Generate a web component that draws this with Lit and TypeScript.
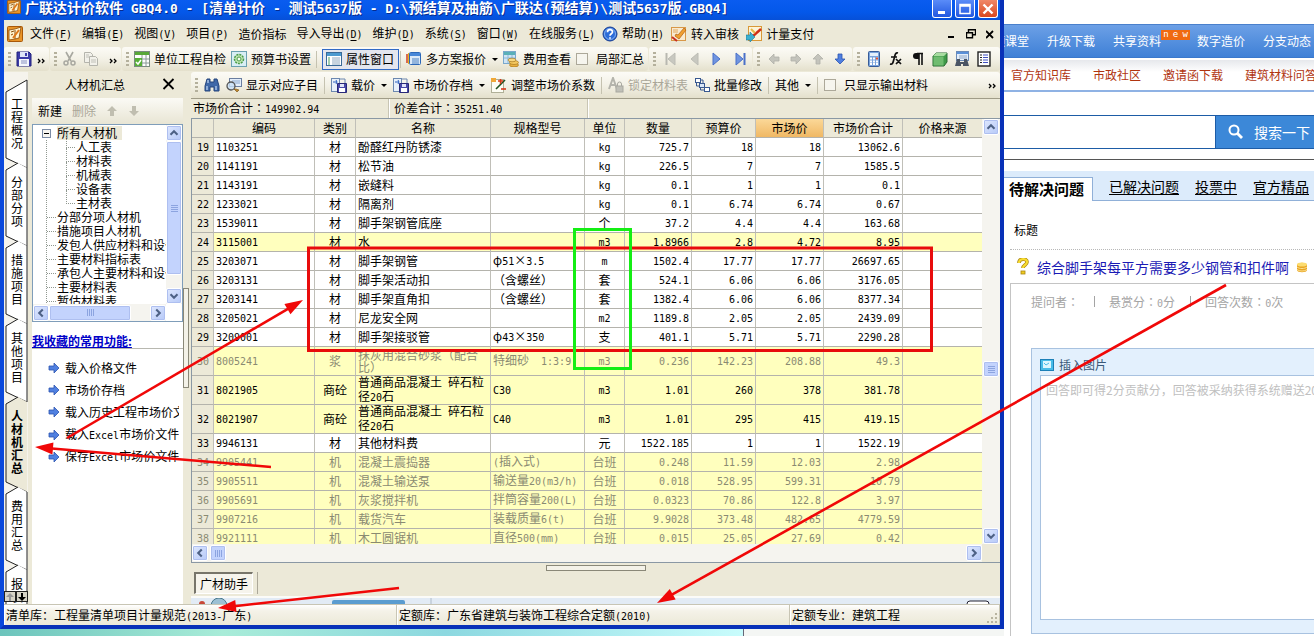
import { LitElement, html, svg, css, nothing } from "lit";
import { customElement } from "lit/decorators.js";
import { classMap } from "lit/directives/class-map.js";

/* Wraps Latin runs in a half-width face so they pair with the 12px Chinese glyphs. */
function t(text: string, centred = false) {
  return text.split(/([\x20-\x7e]+|：)/).filter(Boolean).map((part) =>
    part === "：" ? (centred ? html`<span class="mid">${part}</span>` : part)
    : /^[\x20-\x7e]/.test(part) ? html`<span class="a">${part}</span>` : part);
}

const icon = (body: unknown, w = 16, h = 16) =>
  html`<svg class="ico" width=${w} height=${h} viewBox="0 0 ${w} ${h}" aria-hidden="true">${body}</svg>`;

const app = svg`<rect x=".5" y=".5" width="15" height="15" rx="1" fill="#e89428" stroke="#a85808"/><path d="M2 4l6-1 6-2-2 11-4 1-6 1z" fill="#fff3d0" stroke="#8a4a08" stroke-width=".8"/><path d="M4 6l3-1M4 9l2-1M8 4v9" stroke="#8a4a08"/><path d="M6 12l6-8" stroke="#e07818" stroke-width="2"/>`;
const save = svg`<path d="M1 1h12l2 2v12H1z" fill="#3c3ca8" stroke="#20207c"/><rect x="4" y="1" width="8" height="5" fill="#dfe6f8"/><rect x="9" y="2" width="2" height="3" fill="#3c3ca8"/><rect x="3" y="8" width="10" height="7" fill="#f4f6fc"/><path d="M5 10h6M5 12h6" stroke="#8890c0"/>`;
const cut = svg`<path d="M4 1l5 9M11 1L6 10" stroke="#a8a8a0" stroke-width="1.6"/><circle cx="4" cy="12" r="2" fill="none" stroke="#a8a8a0" stroke-width="1.5"/><circle cx="11" cy="12" r="2" fill="none" stroke="#a8a8a0" stroke-width="1.5"/>`;
const copy = svg`<path d="M1.500 1.500h6l2 2v8h-8z" fill="#f2f1ea" stroke="#b4b4ac"/><path d="M6.500 5.500h6l2 2v7h-8z" fill="#f2f1ea" stroke="#b4b4ac"/><path d="M8 9h5M8 11h5M3 4h3M3 6h3" stroke="#c0c0b8"/>`;
const check = svg`<rect x=".5" y=".5" width="15" height="15" fill="#fff" stroke="#7a8a80"/><rect x="1" y="1" width="14" height="3" fill="#58a838"/><path d="M1 8h14M1 12h14M8 4v11M12 4v11" stroke="#8a9a98"/><rect x="1" y="7" width="7" height="8" fill="#58b038"/><path d="M2 11l2 2 3-4" stroke="#fff" stroke-width="1.500" fill="none"/>`;
const gear = svg`<rect x=".5" y=".5" width="15" height="15" fill="#d8eef4" stroke="#6aa0b0"/><circle cx="8" cy="8" r="4.500" fill="#bfe6b0" stroke="#4a9a4a" stroke-width="1.500" stroke-dasharray="2 1"/><circle cx="8" cy="8" r="2" fill="#f4fff0" stroke="#4a9a4a"/>`;
const props = svg`<rect x=".5" y="1.500" width="15" height="13" fill="#fff" stroke="#3a6a98"/><rect x="1" y="2" width="14" height="3" fill="#4c9ad0"/><path d="M2 7h2M2 9h2M2 11h2M2 13h2" stroke="#48a060"/><path d="M6 7h8M6 9h8M6 11h8M6 13h8" stroke="#90a8c0"/>`;
const plans = svg`<path d="M1 3v9" stroke="#d04020" stroke-width="1.500"/><path d="M2.500 2v11" stroke="#e8b020"/><rect x="3.500" y="1.500" width="11" height="12" rx="1" fill="#dceaf8" stroke="#2c68b8"/><rect x="4" y="2" width="10" height="3" fill="#4888d8"/><path d="M6 8h7M6 10h7M6 12h7" stroke="#4a80c0"/>`;
const fee = svg`<rect x=".5" y=".5" width="12" height="12" fill="#cfe4f4" stroke="#7aa8cc"/><rect x="1" y="1" width="11" height="3" fill="#5ab0b8"/><path d="M1 7h11M5 4v8M9 4v8" stroke="#8ab8d8"/><ellipse cx="11" cy="14" rx="4.500" ry="2" fill="#e8b040" stroke="#9a6a10" stroke-width=".6"/><ellipse cx="11" cy="11.500" rx="4.500" ry="2" fill="#f4c860" stroke="#9a6a10" stroke-width=".6"/><ellipse cx="9" cy="9" rx="4" ry="1.800" fill="#f8d880" stroke="#9a6a10" stroke-width=".6"/>`;
const tri = (dir: number, bar: boolean, on: boolean) => svg`<g transform=${dir < 0 ? "translate(16 0) scale(-1 1)" : ""}><path d="M4 2l7 6-7 6z" fill=${on ? "#6f94e0" : "#c8c8c0"} stroke=${on ? "#4a70c8" : "#bcbcb4"}/>${bar ? svg`<path d="M12.500 2v12" stroke=${on ? "#4a70c8" : "#b8b8b0"} stroke-width="2"/>` : nothing}</g>`;
const arrow = (deg: number, on: boolean) => svg`<path transform="rotate(${deg} 8 8)" d="M3 6h5V3l5 5-5 5v-3H3z" fill=${on ? "#5080e0" : "#c4c4bc"} stroke=${on ? "#2c54b0" : "#b0b0a8"} stroke-width=".8"/>`;
const calc = svg`<rect x="2.500" y=".5" width="11" height="15" rx="1" fill="#7aa4dc" stroke="#385c98"/><rect x="4" y="2" width="8" height="3" fill="#e4f0fc"/><path d="M4 7.500h8M4 10.500h8M4 13h8" stroke="#fff" stroke-width="2" stroke-dasharray="2 1"/><path d="M10 7.500h2" stroke="#e05030" stroke-width="2"/>`;
const fx = svg`<path d="M10 2c-3-1-3 3-4 6s-1 6-4 5M3 6h6M8 8l5 5M13 8l-5 5" fill="none" stroke="#111" stroke-width="1.700"/>`;
const para = svg`<path d="M13 2.500H7M9 3v11M12 3v11" stroke="#111" stroke-width="1.600" fill="none"/><path d="M9 2H6a3 3 0 000 6h3z" fill="#111"/>`;
const cube = svg`<path d="M1 5l3-3h11v9l-3 4H1z" fill="#3f9a48" stroke="#2a6a34"/><path d="M1 5l3-3h11l-3 3z" fill="#a8dca0"/><path d="M1.500 5.500h10v9h-10z" fill="#70bc70"/>`;
const find = svg`<rect x="2.500" y=".5" width="12" height="9" fill="#e4eefa" stroke="#6a8ab8"/><rect x="3" y="1" width="11" height="2" fill="#5a90d8"/><path d="M5 5h8M5 7h8" stroke="#90a8c8"/><path d="M3 8h3v3h4V8h3l2 7H9v-2H7v2H1z" fill="#4a5464"/>`;
const list = svg`<rect x="2" y="1" width="12" height="14" fill="#fff" stroke="#222" stroke-width="1.400"/><path d="M4 4h2M4 6.500h2M4 9h2M4 11.500h2" stroke="#222"/><path d="M7 4h5M7 6.500h5M7 9h5M7 11.500h5" stroke="#4050c0"/>`;
const bino = svg`<path d="M3 2h3v3h4V2h3l2 7v5h-5v-4H6v4H1V9z" fill="#3f68a8" stroke="#24447c"/><path d="M3 9v4M12 9v4M4 3v3" stroke="#b8d0f0" stroke-width="1.300"/>`;
const look = svg`<rect x="3.500" y="1.500" width="12" height="8" fill="#e4eefa" stroke="#6a7ea0"/><path d="M6 4h8M6 6h8" stroke="#8aa8d0"/><circle cx="5" cy="9" r="4" fill="#c8e0f8" fill-opacity=".8" stroke="#555" stroke-width="1.300"/><path d="M8 12l3 3 2-2-3-1z" fill="#c08830" stroke="#704c10" stroke-width=".6"/>`;
const load = svg`<rect x=".5" y="1.500" width="8" height="13" fill="#e8f0fa" stroke="#6c88b0"/><path d="M2 5h4l-1-2M6 5l-1 2" stroke="#2c60c0" fill="none"/><path d="M6.500 6.500h9v9h-9z" fill="#4848a8" stroke="#282878"/><rect x="9" y="7" width="4" height="3" fill="#e0e4f8"/><rect x="8" y="11" width="6" height="4" fill="#fff"/><path d="M8 2h6v4" fill="none" stroke="#6c88b0"/>`;
const adjust = svg`<rect x=".5" y="2.500" width="12" height="13" fill="#fdfdf4" stroke="#b0b098"/><rect x="0" y="1" width="5" height="4" fill="#f0a838"/><path d="M5 12L14 3" stroke="#205020" stroke-width="1.600"/><path d="M7 4h5M9.500 2v5" stroke="#d83818" stroke-width="1.500"/><path d="M10 12h5" stroke="#d83818" stroke-width="1.600"/>`;
const lock = svg`<path d="M1 12L5 1l4 11M3 8h5" fill="none" stroke="#b4b4ac" stroke-width="2"/><rect x="8" y="9" width="7" height="6" fill="#c0c0b8" stroke="#a8a8a0"/><path d="M9.500 9V7a2 2 0 014 0v2" fill="none" stroke="#a8a8a0"/>`;
const batch = svg`<rect x="1.500" y="1.500" width="5" height="4" fill="#fff" stroke="#385890"/><rect x="5.500" y="6.500" width="5" height="4" fill="#d8e6f8" stroke="#385890"/><rect x="10.500" y="10.500" width="5" height="4" fill="#fff" stroke="#385890"/><path d="M2.500 6v3h3M6.500 11v2h4M6 3h3v3" fill="none" stroke="#385890"/>`;
const help = svg`<circle cx="8" cy="8" r="7" fill="#2c6cd8" stroke="#163c90"/><circle cx="8" cy="8" r="5.500" fill="none" stroke="#a8ccf8" stroke-width=".7"/><path d="M5.500 6.200c0-3.400 5-3.200 5-.3 0 1.800-2.500 1.900-2.500 3.800M8 11.200v1.600" fill="none" stroke="#fff" stroke-width="1.700"/>`;
const audit = svg`<rect x=".5" y="1.500" width="14" height="13" fill="#f8ead0" stroke="#d89848"/><path d="M2 6h5M2 4h5" stroke="#e0a860"/><path d="M4 10l4 3 7-9-2-2-6 7-2-1z" fill="#f0a030" stroke="#b05c10" stroke-width=".7"/><path d="M1 11l5 4" stroke="#c83020" stroke-width="2"/>`;
const pay = svg`<rect x="2.500" y=".5" width="13" height="14" fill="#fdf4d8" stroke="#d89838"/><path d="M7 10l8-7" stroke="#d03018" stroke-width="2.400" fill="none"/><path d="M5 3l4 4" stroke="#e8b848" stroke-width="2"/><path d="M9 11L4 6v3H0v5h4v2z" fill="#3cb0d0" stroke="#207890" stroke-width=".6"/>`;
const chev = (deg: number) => svg`<path transform="rotate(${deg} 8 8)" d="M4 10l4-4 4 4" fill="none" stroke="#4d6185" stroke-width="2.400"/>`;

const scrollBtn = (label: string, deg: number) =>
  html`<button class="sb" aria-label=${label}><svg width="14" height="14" viewBox="0 0 16 16" aria-hidden="true">${chev(deg)}</svg></button>`;
const grip = html`<i class="grip"></i>`;
const sep = html`<i class="sep"></i>`;
const more = html`<button class="more" aria-label="更多"><svg width="8" height="7" viewBox="0 0 8 7" aria-hidden="true"><path d="M1 1l2 2-2 2M5 1l2 2-2 2" fill="none" stroke="#000" stroke-width="1.300"/></svg></button>`;
const tool = (pic: unknown, text = "", o: { cls?: string; drop?: boolean; label?: string } = {}) =>
  html`<button class="tool ${o.cls ?? ""}" aria-label=${text || o.label || "工具"}>${icon(pic)}${text ? html`<span>${text}</span>` : nothing}${o.drop ? html`<i class="drop"></i>` : nothing}</button>`;

const MENU: [string, string][] = [["文件", "F"], ["编辑", "E"], ["视图", "V"], ["项目", "P"], ["造价指标", ""], ["导入导出", "D"], ["维护", "D"], ["系统", "S"], ["窗口", "W"], ["在线服务", "L"]];
const TABS = ["工程概况", "分部分项", "措施项目", "其他项目", "人材机汇总", "费用汇总", "报表"];
const TREE: [number, string][] = [[0, "所有人材机"], [2, "人工表"], [2, "材料表"], [2, "机械表"], [2, "设备表"], [2, "主材表"], [1, "分部分项人材机"], [1, "措施项目人材机"], [1, "发包人供应材料和设备"], [1, "主要材料指标表"], [1, "承包人主要材料和设备"], [1, "主要材料表"], [1, "暂估材料表"]];
const LINKS = ["载入价格文件", "市场价存档", "载入历史工程市场价文件", "载入Excel市场价文件", "保存Excel市场价文件"];
const HEAD = ["", "编码", "类别", "名称", "规格型号", "单位", "数量", "预算价", "市场价", "市场价合计", "价格来源"];
/* tone: "" plain, "y" highlighted, "g" highlighted and inactive */
const ROWS: [string, ...string[]][] = [
  ["", "19", "1103251", "材", "酚醛红丹防锈漆", "", "kg", "725.7", "18", "18", "13062.6"],
  ["", "20", "1141191", "材", "松节油", "", "kg", "226.5", "7", "7", "1585.5"],
  ["", "21", "1143191", "材", "嵌缝料", "", "kg", "0.1", "1", "1", "0.1"],
  ["", "22", "1233021", "材", "隔离剂", "", "kg", "0.1", "6.74", "6.74", "0.67"],
  ["", "23", "1539011", "材", "脚手架钢管底座", "", "个", "37.2", "4.4", "4.4", "163.68"],
  ["y", "24", "3115001", "材", "水", "", "m3", "1.8966", "2.8", "4.72", "8.95"],
  ["", "25", "3203071", "材", "脚手架钢管", "φ51×3.5", "m", "1502.4", "17.77", "17.77", "26697.65"],
  ["", "26", "3203131", "材", "脚手架活动扣", "（含螺丝）", "套", "524.1", "6.06", "6.06", "3176.05"],
  ["", "27", "3203141", "材", "脚手架直角扣", "（含螺丝）", "套", "1382.4", "6.06", "6.06", "8377.34"],
  ["", "28", "3205021", "材", "尼龙安全网", "", "m2", "1189.8", "2.05", "2.05", "2439.09"],
  ["", "29", "3209001", "材", "脚手架接驳管", "φ43×350", "支", "401.1", "5.71", "5.71", "2290.28"],
  ["g", "30", "8005241", "浆", "抹灰用混合砂浆（配合比）", "特细砂  1:3:9", "m3", "0.236", "142.23", "208.88", "49.3"],
  ["y", "31", "8021905", "商砼", "普通商品混凝土 碎石粒径20石", "C30", "m3", "1.01", "260", "378", "381.78"],
  ["y", "32", "8021907", "商砼", "普通商品混凝土 碎石粒径20石", "C40", "m3", "1.01", "295", "415", "419.15"],
  ["", "33", "9946131", "材", "其他材料费", "", "元", "1522.185", "1", "1", "1522.19"],
  ["g", "34", "9905441", "机", "混凝土震捣器", "(插入式)", "台班", "0.248", "11.59", "12.03", "2.98"],
  ["g", "35", "9905511", "机", "混凝土输送泵", "输送量20(m3/h)", "台班", "0.018", "528.95", "599.31", "10.79"],
  ["g", "36", "9905691", "机", "灰浆搅拌机", "拌筒容量200(L)", "台班", "0.0323", "70.86", "122.8", "3.97"],
  ["g", "37", "9907216", "机", "载货汽车", "装载质量6(t)", "台班", "9.9028", "373.48", "482.65", "4779.59"],
  ["g", "38", "9921111", "机", "木工圆锯机", "直径500(mm)", "台班", "0.015", "25.05", "27.69", "0.42"],
];

const base = css`
  * { box-sizing: border-box; }
  .a { font-family: "DejaVu Sans Mono", monospace; font-size: 10px; white-space: pre; }
  .mid { font-family: "Noto Sans CJK TC", sans-serif; }
  button { font: inherit; color: inherit; border: 0; background: none; padding: 0; margin: 0; }
  .ico { display: block; flex: none; }
`;

@customElement("estimate-window")
class EstimateWindow extends LitElement {
  static styles = [base, css`
    :host { display: flex; flex-direction: column; min-width: 0; min-height: 0; background: #ece9d8; border: 4px solid #0a48dc; border-top: 0; border-right-color: #0831b8; border-bottom-color: #0831b8; overflow: hidden; }
    .title { flex: none; height: 20px; margin: 0 -4px; padding: 0 6px; display: flex; align-items: flex-start; gap: 3px; background: linear-gradient(#0a5cf0, #0458ea 60%, #0650d8); color: #fff; }
    .title h1 { flex: 1; min-width: 0; margin: 0; font-size: 14px; line-height: 14px; font-weight: 700; white-space: nowrap; text-shadow: 1px 1px #062c90; }
    .title .a { font-size: 13px; white-space: pre; }
    .title .ico { height: 14px; }
    .cap { width: 20px; height: 18px; border: 1px solid #fff; border-top: 0; border-radius: 0 0 3px 3px; background: linear-gradient(#5a8cf8, #2258e0); flex: none; display: grid; place-items: center; }
    .cap.x { background: linear-gradient(#f08868, #d84820); }
    .menu { flex: none; height: 27px; display: flex; align-items: center; gap: 10px; padding: 0 6px 0 3px; white-space: nowrap; }
    .menu .mi { display: flex; align-items: center; gap: 4px; }
    .menu .ic2 { margin-left: -3px; }
    .menu .sp { flex: 1; }
    .menu u { text-underline-offset: 2px; }
    .bar { flex: none; display: flex; height: 24px; overflow: hidden; white-space: nowrap; }
    .main .bar { height: 26px; }
    .band { display: flex; align-items: center; padding: 0 4px; gap: 5px; border-radius: 3px; background: linear-gradient(#fcfbf6, #f3f1e6 50%, #e4e0cc); flex: none; margin-right: 1px; }
    .band.m { gap: 6px; }
    .band.l { gap: 7px; }
    .band.last { flex: 1; margin-right: 0; }
    .grip { width: 3px; height: 15px; flex: none; background: repeating-linear-gradient(#b4b09c 0 2px, transparent 2px 4px); }
    .sep { width: 1px; height: 17px; background: #c5c2b0; flex: none; }
    .tool { display: flex; align-items: center; gap: 4px; height: 21px; }
    .tool.on { border: 1px solid #316ac5; background: #e4e6ee; padding: 0 4px 0 3px; margin-right: -4px; }
    .tool.off { color: #aaa698; }
    .drop { border: 3px solid transparent; border-top-color: #000; border-bottom: 0; margin-left: 2px; }
    .more { align-self: flex-start; padding-top: 5px; }
    .tool + .more { margin-left: 5px; }
    .s .tool + .more { margin-left: 0; }
    .tick { display: flex; align-items: center; gap: 8px; }
    .tick input { appearance: none; width: 12px; height: 12px; border: 1px solid #aca899; margin: 0; background: #f6f5ee; }
    .body { flex: 1; min-height: 0; display: flex; padding-top: 1px; }
    .tabs { width: 24px; flex: none; padding: 12px 0 0 2px; background: #f5f3ec; overflow: hidden; position: relative; }
    .tab { display: flex; align-items: center; justify-content: center; position: relative; width: 22px; height: 78px; }
    .tab.long { height: 90px; font-weight: 700; }
    .tab.cutoff { align-items: flex-start; padding-top: 13px; }
    .tab svg { position: absolute; left: 0; top: -8px; overflow: visible; }
    .tab span { position: relative; width: 12px; line-height: 13px; word-break: break-all; }
    .flip { position: absolute; left: 0; bottom: 2px; display: flex; }
    .flip button { width: 12px; height: 11px; border: 1px solid #222; background: #d8d5c8; display: grid; place-items: center; }
    .side { flex: none; width: 151px; min-width: 0; margin-left: 4px; display: flex; flex-direction: column; background: #fff; min-height: 0; overflow: hidden; }
    .side header { flex: none; height: 26px; background: #ece9d8; display: flex; align-items: center; justify-content: space-between; padding: 0 8px 0 33px; }
    .side .cmds { flex: none; height: 26px; padding: 0 6px; display: flex; align-items: center; gap: 10px; background: linear-gradient(#fbfaf5, #e8e5d4); }
    .off { color: #aaa698; }
    .treebox { flex: none; height: 198px; border: 1px solid #7f9db9; display: grid; grid-template-columns: minmax(0, 1fr) 16px; grid-template-rows: minmax(0, 1fr) 17px; }
    .tree { overflow: hidden; margin: 1px 0 0; padding: 0; list-style: none; min-height: 0; white-space: nowrap; background: repeating-linear-gradient(#909890 0 1px, transparent 1px 2px) 13px 14px / 1px 200px no-repeat; }
    .tree li { height: 14px; line-height: 14px; display: flex; align-items: center; padding-left: 14px; }
    .tree li i { width: 9px; margin-right: 1px; border-top: 1px dotted #909890; flex: none; }
    .tree li.d2 { padding-left: 33px; }
    .tree li.d2 i { position: relative; }
    .tree li.d2 i::before { content: ""; position: absolute; left: 0; bottom: 0; height: 14px; border-left: 1px dotted #909890; }
    .tree li.d0 { padding-left: 9px; gap: 6px; }
    .tree li.d0 span { background: #ece9d8; padding-right: 5px; }
    .tree li.d0 button { width: 9px; height: 9px; border: 1px solid #7b8ba5; background: #f6f5f0; display: grid; place-items: center; }
    .tree li.d0 button::before { content: ""; width: 5px; height: 1px; background: #000; }
    .vs, .hs { display: flex; background: #f5f4ef; }
    .vs { flex-direction: column; align-items: center; }
    .hs { align-items: center; }
    .sb { width: 16px; height: 16px; flex: none; display: grid; place-items: center; background: linear-gradient(135deg, #dfe8fe, #b6c9f8); border: 1px solid #fff; border-radius: 2px; box-shadow: inset 0 0 0 1px #aebff0; }
    .thumb { background: #c3d3fd; border: 1px solid #fff; border-radius: 2px; box-shadow: inset 0 0 0 1px #aebff0; display: grid; place-items: center; }
    .thumb::before { content: ""; width: 7px; height: 7px; background: repeating-linear-gradient(#8ca4e0 0 1px, transparent 1px 2px); }
    .hs .thumb { height: 16px; }
    .vs .thumb { width: 16px; }
    .hs .thumb::before { background: repeating-linear-gradient(90deg, #8ca4e0 0 1px, transparent 1px 2px); }
    .t1 { height: 134px; }
    .t2 { width: 82px; }
    .t3 { height: 16px; }
    .t4 { width: 16px; margin-left: 2px; }
    .grow { flex: 1; }
    .grow3 { flex: 3; }
    .grow2 { flex: 2; }
    .fav { margin: 10px 0 0; height: 17px; border-bottom: 1px solid #b8b8b0; font-size: 12px; line-height: 18px; font-weight: 700; color: #0000c8; text-decoration: underline; white-space: nowrap; flex: none; }
    .links { list-style: none; margin: 8px 4px 0 14px; padding: 0; overflow: hidden; white-space: nowrap; }
    .links li { height: 22px; line-height: 22px; }
    .links a { display: flex; align-items: center; gap: 3px; color: #000; text-decoration: none; }
    .vsplit { width: 8px; flex: none; display: flex; align-items: center; }
    .vsplit i { width: 6px; height: 100px; border: 1px solid #8a8878; background: #f4f2e8; }
    .main { flex: 1; min-width: 0; display: flex; flex-direction: column; }
    .info { flex: none; height: 20px; display: flex; line-height: 18px; border-top: 1px solid #a09c88; white-space: nowrap; }
    .info span.cell { width: 199px; padding-left: 2px; border-right: 1px solid #fff; box-shadow: inset -1px 0 #c8c5b4; }
    .info span.cell + .cell { padding-left: 4px; }
    .grid { flex: 1; min-height: 0; display: grid; grid-template-columns: minmax(0, 1fr) 18px; grid-template-rows: minmax(0, 1fr) 18px; border: 1px solid #8a98a4; border-right: 0; background: #ece9d8; }
    .clip { overflow: hidden; min-height: 0; }
    table { width: 100%; table-layout: fixed; border-collapse: separate; border-spacing: 0; background: #fff; }
    th, td { height: 19px; padding: 0 2px; line-height: 12px; border-right: 1px solid #c0bfb8; border-bottom: 1px solid #b4b3ac; font-weight: 400; overflow: hidden; white-space: nowrap; }
    thead th { background: #ece9d8; text-align: center; }
    thead th.hot { background: linear-gradient(#fbd898, #f0b864); }
    tbody th { background: #ece9d8; text-align: right; padding-right: 4px; }
    td:last-child, th:last-child { border-right: 0; }
    td.c { text-align: center; }
    td.r { text-align: right; }
    td.w, td.w .a { white-space: normal; }
    tr.y, tr.g { background: #ffffbe; }
    tr.g { color: #8a8a72; }
    tr.tall td, tr.tall th { height: 29px; }
    .c0 { width: 22px; } .c1 { width: 101px; } .c2 { width: 41px; } .c3 { width: 135px; } .c4 { width: 94px; } .c5 { width: 40px; }
    .c6 { width: 67px; } .c7 { width: 64px; } .c8 { width: 68px; } .c9 { width: 79px; }
    .hsplit { height: 9px; flex: none; display: flex; justify-content: center; align-items: center; }
    .hsplit i { width: 100px; height: 6px; border: 1px solid #8a8878; background: #f4f2e8; }
    .helper { flex: none; height: 22px; padding-left: 3px; display: flex; }
    .helper button { border: 1px solid #fff; border-left: 2px solid #77756a; border-top: 2px solid #77756a; background: #f6f4ec; padding: 0 4px; line-height: 18px; white-space: nowrap; }
    .helper i { border-left: 1px solid #aca899; margin-left: 4px; }
    .strip { flex: none; height: 8px; margin-top: 2px; border-top: 2px solid #fbfbf8; background: #e2ebf5; overflow: hidden; }
    .strip svg { display: block; }
    .status { flex: none; height: 21px; display: grid; grid-template-columns: 393fr 393fr 210fr; border-top: 1px solid #c8c5b4; background: linear-gradient(#fff, #f4f2e8 30%, #ece9d8); line-height: 20px; white-space: nowrap; }
    .status span.cell { padding-left: 1px; overflow: hidden; border-left: 1px solid #fff; box-shadow: inset -1px 0 #c8c5b4; }
    .status .end { display: flex; justify-content: space-between; align-items: flex-end; box-shadow: none; }
  `];

  private tab(label: string) {
    const on = label === "人材机汇总";
    const first = label === TABS[0];
    const h = on ? 90 : 78;
    const peak = first ? "21 4" : "12 9";
    const right = first ? 4 : 14;
    return html`<button class=${classMap({ tab: true, long: on, cutoff: label === "报表" })} aria-pressed=${on}>
      <svg width="22" height=${h} aria-hidden="true">
        <path d="M0 ${h + 4}V16L${peak} L21 ${right}V${h + 14}Z" fill=${on ? "#ece9d8" : "#fff"}/>
        <path d="M${peak}L0 16V${h + 4}L21 ${h + 14}${on ? "" : `V${right}`}" fill="none" stroke="#222"/>
      </svg><span>${label}</span></button>`;
  }

  render() {
    return html`
      <div class="title">${icon(app)}<h1>${t("广联达计价软件 GBQ4.0 - [清单计价 - 测试5637版 - D:\\预结算及抽筋\\广联达(预结算)\\测试5637版.GBQ4]")}</h1>
        <button class="cap" aria-label="最小化"><svg width="12" height="12"><path d="M2 9.500h7" stroke="#fff" stroke-width="3"/></svg></button>
        <button class="cap" aria-label="最大化"><svg width="12" height="12"><path d="M1 1.500h10v9H1zM1 3h10" fill="none" stroke="#fff" stroke-width="1.500"/></svg></button>
        <button class="cap x" aria-label="关闭"><svg width="12" height="12"><path d="M1.500 1.500l9 9m0-9l-9 9" stroke="#fff" stroke-width="2.400"/></svg></button>
      </div>
      <nav class="menu">
        <span class="mi">${icon(app)}</span>
        ${MENU.map(([m, k], i) => html`<button class=${i ? "" : "ic2"}>${m}${k ? html`<span class="a">(<u>${k}</u>)</span>` : nothing}</button>`)}
        <button class="mi ic2">${icon(help)}<span>帮助<span class="a">(<u>H</u>)</span></span></button>
        <button class="mi ic2">${icon(audit)}转入审核</button>
        <button class="mi ic2">${icon(pay)}计量支付</button>
        <span class="sp"></span>
        <button aria-label="最小化文档"><svg width="8" height="10"><path d="M0 8h6" stroke="#000" stroke-width="2"/></svg></button>
        <button aria-label="还原文档"><svg width="10" height="10"><path d="M2.500 3V.8h7v5H7M.5 3.800h6v5h-6z" fill="none" stroke="#000" stroke-width="1.400"/></svg></button>
        <button aria-label="关闭文档"><svg width="8" height="9"><path d="M0 1l7 7m0-7L0 8" stroke="#000" stroke-width="1.800"/></svg></button>
      </nav>
      <div class="bar">
        <div class="band s">${grip}${tool(save, "", { label: "保存" })}${more}</div>
        <div class="band">${grip}${tool(cut, "", { label: "剪切" })}${tool(copy, "", { label: "复制" })}${more}</div>
        <div class="band">${grip}${tool(check, "单位工程自检")}${tool(gear, "预算书设置")}${sep}${tool(props, "属性窗口", { cls: "on" })}${sep}${tool(plans, "多方案报价", { drop: true })}${tool(fee, "费用查看")}
          <label class="tick"><input type="checkbox">局部汇总</label></div>
        <div class="band l">${grip}${tool(tri(-1, true, false), "", { label: "首条" })}${tool(tri(-1, false, false), "", { label: "上一条" })}${tool(tri(1, false, true), "", { label: "下一条" })}${tool(tri(1, true, true), "", { label: "末条" })}</div>
        <div class="band m">${grip}${tool(arrow(180, false), "", { label: "左移" })}${tool(arrow(0, false), "", { label: "右移" })}${tool(arrow(-90, false), "", { label: "上移" })}${tool(arrow(90, true), "", { label: "下移" })}</div>
        <div class="band last m">${grip}${tool(calc, "", { label: "计算器" })}${tool(fx, "", { label: "函数" })}${tool(para, "", { label: "段落" })}${tool(cube, "", { label: "图形" })}${tool(find, "", { label: "查找" })}${tool(list, "", { label: "列表" })}</div>
      </div>
      <div class="body">
        <nav class="tabs">${TABS.map((x) => this.tab(x))}
          <div class="flip"><button aria-label="上翻"><svg width="8" height="8"><path d="M4 0l4 4H5v4H3V4H0z" fill="#999"/></svg></button><button aria-label="下翻"><svg width="8" height="8"><path d="M4 8l4-4H5V0H3v4H0z" fill="#000"/></svg></button></div>
        </nav>
        <aside class="side">
          <header>人材机汇总<button aria-label="关闭面板"><svg width="13" height="12"><path d="M1.500 1l10 10m0-10l-10 10" stroke="#000" stroke-width="1.800"/></svg></button></header>
          <div class="cmds"><button>新建</button><button class="off">删除</button><button aria-label="上移">${icon(svg`<path d="M6 1l5 5H8v5H4V6H1z" fill="#c0beb0"/>`, 12, 12)}</button><button aria-label="下移">${icon(svg`<path d="M6 11l5-5H8V1H4v5H1z" fill="#c0beb0"/>`, 12, 12)}</button></div>
          <div class="treebox">
            <ul class="tree">${TREE.map(([d, x]) => html`<li class="d${d}">${d ? html`<i></i>` : html`<button aria-label="折叠"></button>`}<span>${x}</span></li>`)}</ul>
            <div class="vs">${scrollBtn("向上", 0)}<div class="thumb t1"></div><div class="grow"></div>${scrollBtn("向下", 180)}</div>
            <div class="hs">${scrollBtn("向左", -90)}<div class="thumb t2"></div><div class="grow"></div>${scrollBtn("向右", 90)}</div>
          </div>
          <h2 class="fav">我收藏的常用功能:</h2>
          <ul class="links">${LINKS.map((x) => html`<li><a href="#">${icon(arrow(0, true))}<span>${t(x)}</span></a></li>`)}</ul>
        </aside>
        <div class="vsplit"><i></i></div>
        <section class="main">
          <div class="bar">
            <div class="band last m">${grip}${tool(bino, "", { label: "查找" })}${tool(look, "显示对应子目")}${sep}${tool(load, "载价", { drop: true })}${tool(load, "市场价存档", { drop: true })}${tool(adjust, "调整市场价系数")}${sep}${tool(lock, "锁定材料表", { cls: "off" })}${tool(batch, "批量修改")}${sep}<button class="tool">其他<i class="drop"></i></button>${sep}
              <label class="tick"><input type="checkbox">只显示输出材料</label><span class="grow"></span>${more}</div>
          </div>
          <div class="info"><span class="cell">${t("市场价合计：149902.94", true)}</span><span class="cell">${t("价差合计：35251.40", true)}</span></div>
          <div class="grid">
            <div class="clip"><table>
              <colgroup>${HEAD.map((_, i) => html`<col class="c${i}">`)}</colgroup>
              <thead><tr>${HEAD.map((h) => html`<th class=${h === "市场价" ? "hot" : ""}>${h}</th>`)}</tr></thead>
              <tbody>${ROWS.map(([tone, no, ...cells]) => html`<tr class=${classMap({ y: tone === "y", g: tone === "g", tall: cells[2].length > 10 })}><th scope="row">${t(no)}</th>
                ${cells.map((c, i) => html`<td class=${i === 1 || i === 4 ? "c" : i > 4 ? "r" : i === 2 ? "w" : ""}>${t(c)}</td>`)}<td></td></tr>`)}</tbody>
            </table></div>
            <div class="vs">${scrollBtn("向上", 0)}<div class="grow3"></div><div class="thumb t3"></div><div class="grow2"></div>${scrollBtn("向下", 180)}</div>
            <div class="hs">${scrollBtn("向左", -90)}<div class="thumb t4"></div><div class="grow"></div>${scrollBtn("向右", 90)}</div>
          </div>
          <div class="hsplit"><i></i></div>
          <div class="helper"><button>广材助手</button><i></i></div>
          <div class="strip"><svg width="808" height="6"><circle cx="11" cy="6" r="3" fill="#c84838"/><circle cx="28" cy="8" r="8" fill="#9cc0d4" stroke="#48788c"/><rect x="141" y="2" width="73" height="8" rx="2" fill="#5a9cd0"/><path d="M240 0v6" stroke="#b0bcc8"/><rect x="776" y="3" width="22" height="8" rx="3" fill="#fff" stroke="#223"/></svg></div>
        </section>
      </div>
      <footer class="status"><span class="cell">${t("清单库：工程量清单项目计量规范(2013-广东)")}</span><span class="cell">${t("定额库：广东省建筑与装饰工程综合定额(2010)")}</span><span class="cell end">${t("定额专业：建筑工程")}<span class="grow"></span><svg width="14" height="14"><path d="M9 3h2M5 7h2M9 7h2M1 11h2M5 11h2M9 11h2" stroke="#b8b4a0" stroke-width="2"/></svg></span></footer>`;
  }
}

@customElement("qa-page")
class QaPage extends LitElement {
  static styles = [base, css`
    :host { display: flex; flex-direction: column; min-width: 0; overflow: hidden; background: #fff; white-space: nowrap; padding-top: 24px; }
    a { color: inherit; text-decoration: none; }
    .nav { flex: none; height: 34px; display: flex; align-items: center; gap: 18px; background: linear-gradient(#6da0e6, #5590de 50%, #3f80d6); color: #fff; border-top: 1px solid #4a80cc; border-bottom: 1px solid #3a78cc; }
    .nav a:first-child { width: 25px; direction: rtl; overflow: hidden; }
    .nav .res { position: relative; margin-right: 18px; }
    .nav b { position: absolute; left: 48px; top: -3px; width: 29px; height: 10px; background: #f06a10; font: 400 9px/9px "DejaVu Sans Mono", monospace; display: flex; justify-content: space-around; }
    .sub { flex: none; height: 34px; display: flex; align-items: center; gap: 22px; padding-left: 7px; color: #b03410; background: linear-gradient(#e6e8ec, #fff 40%); border-bottom: 2px solid #8fb2e4; border-top: 2px solid #fff; }
    .search { flex: none; height: 34px; margin-top: 23px; display: flex; border: 1px solid #1d5ca6; border-width: 1px 0; }
    .search input { flex: 1; min-width: 0; border: 0; outline: 0; padding: 0 8px; }
    .search button { flex: none; width: 99px; background: #3c88d8; border-left: 1px solid #1d5ca6; color: #fff; font-size: 14px; display: flex; align-items: center; padding-left: 12px; gap: 10px; }
    hr { width: 100%; flex: none; border: 0; border-top: 1px solid #555; margin: 10px 0 11px; }
    .tabs { flex: none; height: 30px; display: flex; align-items: center; gap: 16px; font-size: 14px; background: #dcebfb; border-bottom: 1px solid #90b0d8; padding-top: 1px; }
    .tabs a { text-decoration: underline; text-underline-offset: 2px; }
    .tabs .cur { align-self: flex-end; height: 24px; line-height: 22px; margin-bottom: -1px; padding: 0 8px 0 5px; background: #fff; border: 1px solid #90b0d8; border-left: 0; border-bottom: 0; font-size: 15px; font-weight: 700; text-decoration: none; }
    .head { margin: 20px 0 0 6px; padding-left: 4px; height: 29px; line-height: 18px; border-bottom: 1px dotted #b8b8b8; flex: none; }
    .q { flex: none; height: 33px; display: flex; align-items: center; gap: 8px; padding-left: 13px; font-size: 14px; color: #1a1ab4; }
    .card { flex: 1; min-height: 0; margin-left: 6px; border: 1px solid #c4c4c4; border-width: 1px 0 0 1px; padding: 7px 0 2px 20px; display: flex; flex-direction: column; }
    .meta { display: flex; height: 22px; line-height: 22px; color: #a4a4a4; flex: none; margin-bottom: 35px; }
    .meta span.f { margin-right: 12px; }
    .meta i { font-style: normal; width: 2px; border-left: 1px solid #a4a4a4; height: 11px; margin: 5px 13px 0 3px; }
    .reply { flex: 1; min-height: 0; background: #e3f0fd; border: 1px solid #a8c2e0; border-right: 0; padding: 6px 0 13px 8px; display: flex; flex-direction: column; }
    .reply button { display: flex; align-items: center; gap: 5px; height: 20px; flex: none; color: #3a5878; }
    .reply textarea { flex: 1; resize: none; overflow: hidden; font: 12px/16px "Noto Sans CJK SC", sans-serif; border: 1px solid #a8c2e0; border-right: 0; outline: 0; padding: 6px 5px; margin: 0; background: #fff; border-radius: 0; min-width: 330px; }
    .reply textarea::placeholder { color: #c0c0c0; }
  `];
  render() {
    return html`
      <nav class="nav"><a href="#">视频课堂</a><a href="#">升级下载</a><a href="#" class="res">共享资料<b><span>n</span><span>e</span><span>w</span></b></a><a href="#">数字造价</a><a href="#">分支动态</a></nav>
      <nav class="sub"><a href="#">官方知识库</a><a href="#">市政社区</a><a href="#">邀请函下载</a><a href="#">建筑材料问答</a></nav>
      <form class="search"><input type="text" aria-label="搜索"><button type="button">${icon(svg`<circle cx="6" cy="6" r="4.500" fill="none" stroke="#fff" stroke-width="2"/><path d="M9 9l5 5" stroke="#fff" stroke-width="2.800"/>`)}搜索一下</button></form>
      <hr>
      <nav class="tabs"><a href="#" class="cur">待解决问题</a><a href="#">已解决问题</a><a href="#">投票中</a><a href="#">官方精品</a></nav>
      <div class="head">标题</div>
      <a class="q" href="#">${icon(svg`<path d="M2 5c0-5 8-5 8-1 0 3-4 3-4 6" fill="none" stroke="#a88410" stroke-width="3.600"/><path d="M2 5c0-5 8-5 8-1 0 3-4 3-4 6" fill="none" stroke="#f8dc30" stroke-width="2.200"/><rect x="4" y="13" width="4" height="3" fill="#f0cc20" stroke="#a88410" stroke-width=".8"/>`, 12, 18)}<span>综合脚手架每平方需要多少钢管和扣件啊</span>${icon(svg`<path d="M0 4c0-3 10-3 10 0v5c0 3-10 3-10 0z" fill="#e8a420"/><ellipse cx="5" cy="3.500" rx="5" ry="2" fill="#fcdc70"/><path d="M0 6c2 2 8 2 10 0M0 8.500c2 2 8 2 10 0" stroke="#fce090" fill="none"/>`, 10, 12)}</a>
      <section class="card">
        <div class="meta"><span class="f">${t("提问者：", true)}</span><i></i><span class="f">${t("悬赏分：0分", true)}</span><i></i><span>${t("回答次数：0次", true)}</span></div>
        <div class="reply"><button>${icon(svg`<rect x=".5" y=".5" width="13" height="11" fill="#48bce8" stroke="#1c80b8"/><rect x="3" y="2" width="8" height="7" fill="#dcf6ff"/><path d="M4 4l2 2 3-2" stroke="#48bce8" fill="none"/>`, 14, 12)}插入图片</button>
          <textarea wrap="off" aria-label="回答" placeholder="回答即可得2分贡献分，回答被采纳获得系统赠送20分"></textarea></div>
      </section>`;
  }
}

@customElement("app-root")
class AppRoot extends LitElement {
  static styles = css`
    :host { display: grid; grid-template-columns: minmax(0, 1004fr) minmax(0, 310fr); height: 100vh; overflow: hidden; position: relative; font: 12px/16px "Noto Sans CJK SC", sans-serif; color: #000; background: #fff; }
    .left { display: flex; flex-direction: column; min-height: 0; min-width: 0; }
    estimate-window { flex: 1; }
    .desk { flex: none; height: 7px; display: flex; background: #f4f6f4; }
    .desk i { width: 74%; background: linear-gradient(90deg, #6cc4bc, #a8ecd8 30%, #8cd8e0 60%, #c8fcfc); border-right: 1px solid #667; }
    .marks { position: absolute; inset: 0; width: 100%; height: 100%; pointer-events: none; }
  `;
  render() {
    const lines = [[67, 438, 303, 300], [271, 467, 35, 447], [399, 588, 218, 608], [1226, 285, 657, 603]];
    return html`
      <div class="left"><estimate-window></estimate-window><div class="desk"><i></i></div></div>
      <qa-page></qa-page>
      <svg class="marks" viewBox="0 0 1314 636" preserveAspectRatio="none" aria-hidden="true">
        <rect x="308.500" y="248" width="623" height="102.500" fill="none" stroke="#e80c0c" stroke-width="3"/>
        <rect x="574.500" y="229.500" width="56" height="139" fill="none" stroke="#14ee14" stroke-width="3"/>
        ${lines.map(([x1, y1, x2, y2]) => {
          const deg = (Math.atan2(y2 - y1, x2 - x1) * 180) / Math.PI;
          const len = Math.hypot(x2 - x1, y2 - y1);
          return svg`<g transform="translate(${x1} ${y1}) rotate(${deg})" fill="#f00808"><path d="M0 -1.300H${len - 14}V1.300H0z"/><path d="M${len} 0l-18 -6v12z"/></g>`;
        })}
      </svg>`;
  }
}
